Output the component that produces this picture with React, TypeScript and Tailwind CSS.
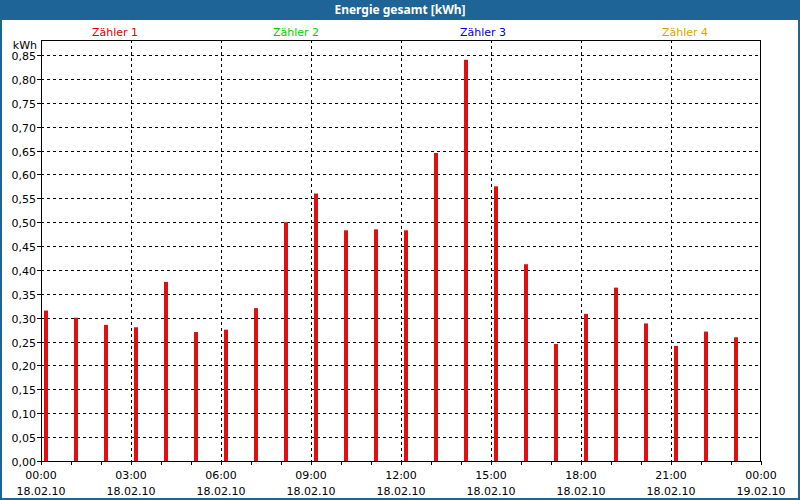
const values = [0.315, 0.3, 0.285, 0.28, 0.375, 0.27, 0.275, 0.32, 0.5, 0.56, 0.483, 0.485, 0.483, 0.645, 0.84, 0.575, 0.412, 0.245, 0.308, 0.363, 0.288, 0.241, 0.271, 0.259];

// page coords -> svg coords (svg sits at x=2, y=20)
const OX = 2;
const OY = 20;
const left = 41 - OX;
const right = 760 - OX;
const top = 40 - OY;
const bottom = 461 - OY;
const perUnit = (461 - 55) / 0.85;
const yOf = (v: number) => bottom - v * perUnit;
const xOf = (h: number) => left + h * 30;

const legend = [
  { label: "Zähler 1", x: 115, color: "#e00000" },
  { label: "Zähler 2", x: 296, color: "#00d000" },
  { label: "Zähler 3", x: 483, color: "#0000e0" },
  { label: "Zähler 4", x: 685, color: "#e0a000" },
];

function Chart() {
  const yTicks = Array.from({ length: 18 }, (_, i) => i * 0.05);
  return (
    <svg width={796} height={478} className="block" style={{ fontFamily: "'DejaVu Sans', sans-serif" }}>
      {legend.map((l) => (
        <text key={l.label} x={l.x - OX} y={36 - OY} fontSize={11} fill={l.color} textAnchor="middle">
          {l.label}
        </text>
      ))}
      <text x={37 - OX} y={49 - OY} fontSize={11} textAnchor="end" fill="#000">kWh</text>
      {yTicks.map((v, i) => {
        const y = Math.round(yOf(v)) + 0.5;
        return (
          <g key={i}>
            {i > 0 && <line x1={left} x2={right} y1={y} y2={y} stroke="#000" strokeDasharray="3 3" />}
            <line x1={left - 4} x2={left} y1={y} y2={y} stroke="#000" />
            <text x={left - 5} y={y + 4} fontSize={11} textAnchor="end" fill="#000">
              {v.toFixed(2).replace(".", ",")}
            </text>
          </g>
        );
      })}
      {[3, 6, 9, 12, 15, 18, 21].map((h) => (
        <line key={h} x1={xOf(h) + 0.5} x2={xOf(h) + 0.5} y1={top} y2={bottom} stroke="#000" strokeDasharray="3 3" />
      ))}
      {Array.from({ length: 25 }, (_, h) => (
        <line key={h} x1={xOf(h) + 0.5} x2={xOf(h) + 0.5} y1={bottom} y2={bottom + 4} stroke="#000" />
      ))}
      {values.map((v, h) => (
        <rect key={h} x={xOf(h) + 3} y={yOf(v)} width={4} height={bottom - yOf(v)} fill="#e01010" />
      ))}
      <rect x={left + 0.5} y={top + 0.5} width={right - left} height={bottom - top} fill="none" stroke="#000" />
      {[0, 3, 6, 9, 12, 15, 18, 21, 24].map((h) => (
        <g key={h} fontSize={11} fill="#000">
          <text x={xOf(h)} y={479 - OY} textAnchor="middle">{String(h % 24).padStart(2, "0")}:00</text>
          <text x={xOf(h)} y={495 - OY} textAnchor="middle">{h === 24 ? "19.02.10" : "18.02.10"}</text>
        </g>
      ))}
    </svg>
  );
}

export default function App() {
  return (
    <div className="w-[800px] h-[500px] bg-white border-x-2 border-b-2 border-[#1e6496] flex flex-col overflow-hidden">
      <div className="h-[20px] -mx-[2px] bg-[#1e6496] text-white text-[12px] font-bold flex items-center justify-center font-['DejaVu_Sans',sans-serif]">
        Energie gesamt [kWh]
      </div>
      <Chart />
    </div>
  );
}
